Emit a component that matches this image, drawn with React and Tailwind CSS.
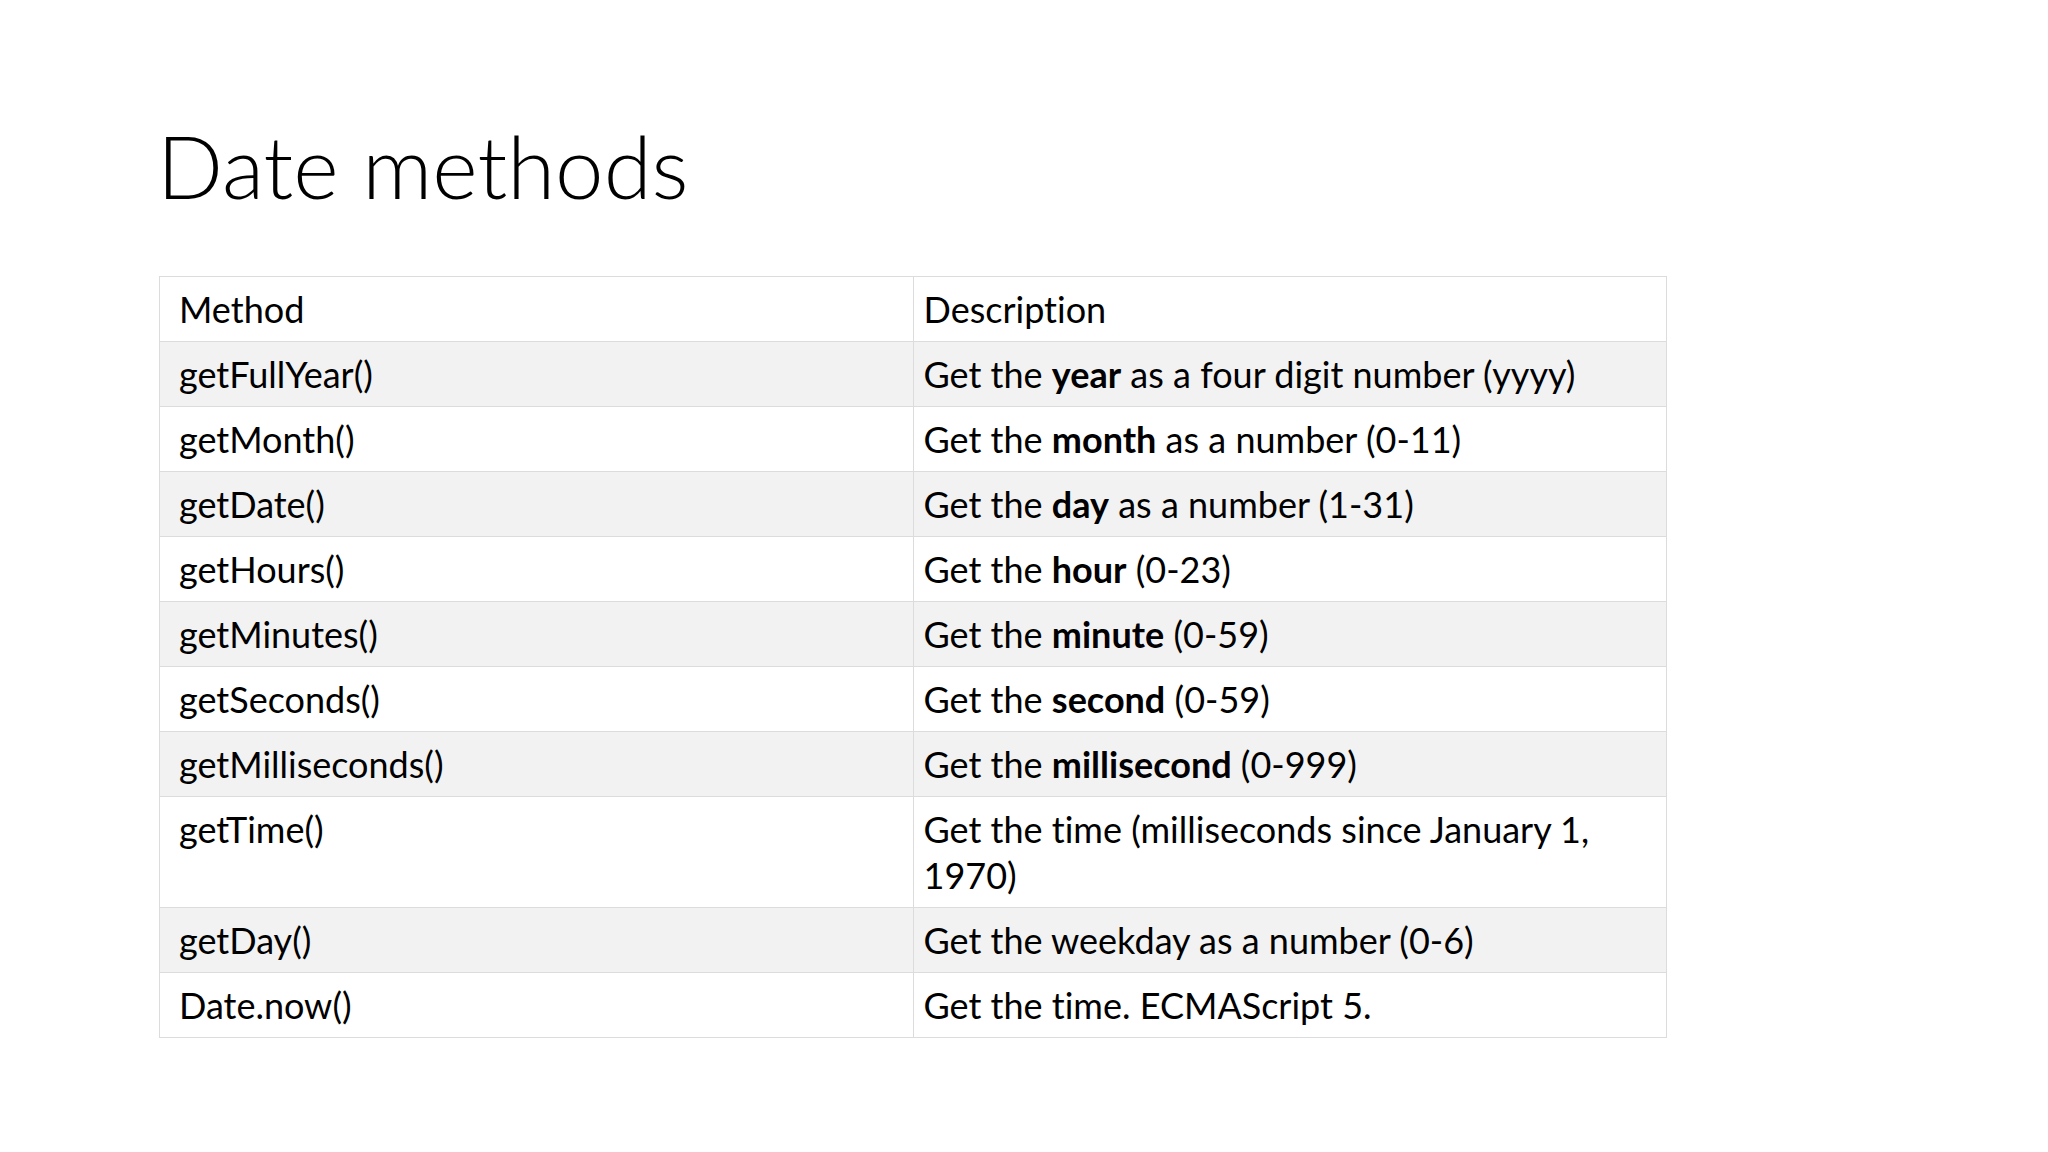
import React from "react";

const rows = [
  { m: "getFullYear()", d: ["Get the ", "year", " as a four digit number (yyyy)"] },
  { m: "getMonth()", d: ["Get the ", "month", " as a number (0-11)"] },
  { m: "getDate()", d: ["Get the ", "day", " as a number (1-31)"] },
  { m: "getHours()", d: ["Get the ", "hour", " (0-23)"] },
  { m: "getMinutes()", d: ["Get the ", "minute", " (0-59)"] },
  { m: "getSeconds()", d: ["Get the ", "second", " (0-59)"] },
  { m: "getMilliseconds()", d: ["Get the ", "millisecond", " (0-999)"] },
  { m: "getTime()", text: "time" },
  { m: "getDay()", d: ["Get the weekday as a number (0-6)"] },
  { m: "Date.now()", d: ["Get the time. ECMAScript 5."] },
];

export default function App() {
  return (
    <div className="w-[2048px] h-[1152px] bg-white text-black font-['Lato',sans-serif] [font-variant-ligatures:none]">
      <div className="pl-[157px] pt-[122px]">
        <h1 className="text-[87px] font-light leading-none">Date methods</h1>
      </div>

      <div className="pl-[159px] pt-[67px]">
        <table className="w-[1508px] border-collapse table-fixed text-[36px] leading-[46px]">
          <tbody>
            <tr className="bg-white">
              <td className="w-1/2 border border-[#dcdcdc] pl-[19px] py-[9px] align-top">Method</td>
              <td className="w-1/2 border border-[#dcdcdc] pl-[10px] py-[9px] align-top">Description</td>
            </tr>
            {rows.map((r, i) => (
              <tr key={r.m} className={i % 2 === 0 ? "bg-[#f2f2f2]" : "bg-white"}>
                <td className="border border-[#dcdcdc] pl-[19px] py-[9px] align-top">{r.m}</td>
                <td className="border border-[#dcdcdc] pl-[10px] py-[9px] align-top">
                  {r.text ? (
                    <>
                      Get the time (milliseconds since January 1,
                      <br />
                      1970)
                    </>
                  ) : (
                    <>
                      {r.d[0]}
                      {r.d[1] && <span className="font-bold">{r.d[1]}</span>}
                      {r.d[2]}
                    </>
                  )}
                </td>
              </tr>
            ))}
          </tbody>
        </table>
      </div>
    </div>
  );
}
